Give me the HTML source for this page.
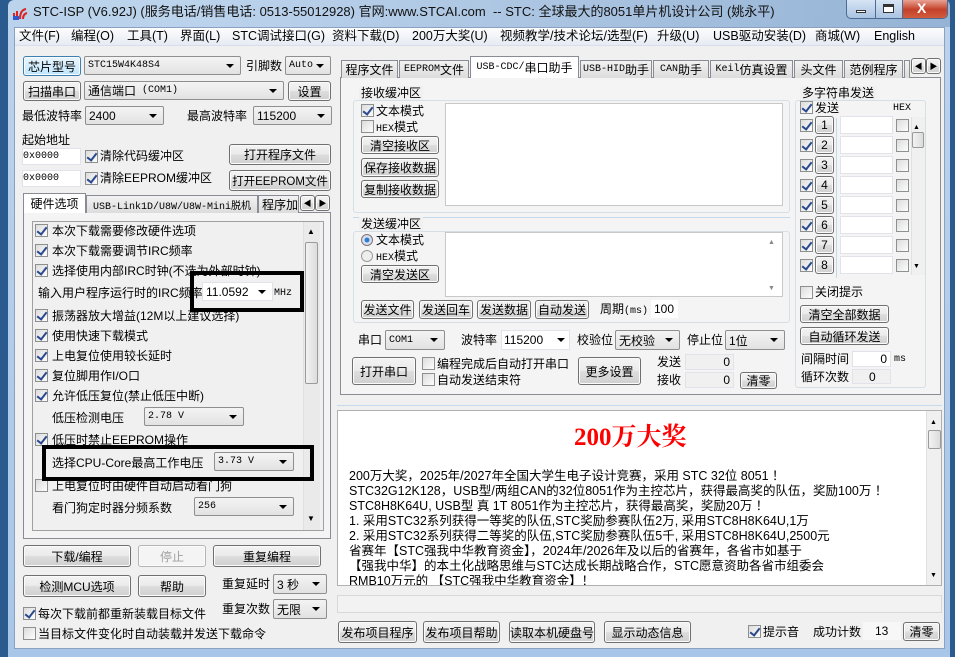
<!DOCTYPE html>
<html><head><meta charset="utf-8">
<style>
*{margin:0;padding:0;box-sizing:border-box}
body{width:955px;height:657px;overflow:hidden;background:#2b5a8e;font:12px "Liberation Sans","Noto Sans CJK SC",sans-serif;color:#000;position:relative}
.a{position:absolute}
.t{position:absolute;white-space:nowrap;line-height:14px}
.b{position:absolute;border:1px solid #707070;border-radius:3px;background:linear-gradient(#f3f3f3 0,#ebebeb 48%,#dddddd 52%,#d0d0d0 100%);white-space:nowrap;display:flex;align-items:center;justify-content:center;box-shadow:inset 0 0 0 1px #fbfbfb}
.s{position:absolute;border:1px solid #8e8f8f;border-radius:2px;background:linear-gradient(#f4f4f4,#e2e2e2);padding-left:3px;display:flex;align-items:center;white-space:nowrap}
.s::after{content:"";position:absolute;right:6px;top:50%;margin-top:-2px;border-left:4px solid transparent;border-right:4px solid transparent;border-top:4px solid #000}
.w{position:absolute;background:#fff;border:1px solid #e2e3ea;white-space:nowrap;display:flex;align-items:center}
.cb{position:absolute;width:13px;height:13px;border:1px solid #8e8f8f;background:linear-gradient(135deg,#dcdcdc,#fdfdfd)}
.cb.on::after{content:"";position:absolute;left:3px;top:0px;width:4px;height:8px;border:solid #2a4a8e;border-width:0 2px 2px 0;transform:rotate(38deg)}
.tab{position:absolute;border:1px solid #898c95;border-bottom:none;background:linear-gradient(#f2f2f2,#dcdcdc);display:flex;align-items:center;justify-content:center;white-space:nowrap;overflow:hidden}
.tab.act{background:#fff;z-index:2}
.g{position:absolute;border:1px solid #d5dfe5;border-radius:3px}
.lbl{position:absolute;background:#f0f0f0;padding:0 2px;line-height:14px;white-space:nowrap}
.bx{position:absolute;border:4px solid #000}
.sb{position:absolute;background:#eaeaea;border-left:1px solid #e0e0e0}
.mono{font-family:"Liberation Mono","Noto Sans CJK SC",monospace;font-size:10px}
</style></head><body>
<div class="a" style="left:8px;top:0;width:942px;height:657px;background:linear-gradient(#bcd3ec,#a8c6e8);border-radius:6px 6px 0 0"></div>
<div class="a" style="left:200px;top:0;width:750px;height:27px;background:linear-gradient(to right,rgba(0,0,0,0),rgba(80,120,170,.35))"></div>
<svg class="a" style="left:12px;top:4px" width="18" height="17"><path d="M2 15 L2 9 M5 15 L5 7 M8 15 Q8 6 14 5 M11 15 Q11 10 15 9" stroke="#d22" stroke-width="2" fill="none"/><rect x="1" y="12" width="6" height="4" fill="#2a5bd0"/></svg>
<div class="t" style="left:33px;top:3px;font-size:13px;line-height:18px;color:#111">STC-ISP (V6.92J) (服务电话/销售电话: 0513-55012928) 官网:www.STCAI.com &nbsp;-- STC: 全球最大的8051单片机设计公司 (姚永平)</div>
<div class="a" style="left:846px;top:0;width:102px;height:19px;border:1px solid #4b6b93;border-top:none;border-radius:0 0 5px 5px;background:linear-gradient(#d6e4f4,#a9c3e2);overflow:hidden">
 <div class="a" style="left:56px;top:0;width:46px;height:19px;background:linear-gradient(#e8a293,#c4412a 50%,#d2603f)"></div>
 <div class="a" style="left:28px;top:0;width:1px;height:19px;background:#4b6b93"></div>
 <div class="a" style="left:55px;top:0;width:1px;height:19px;background:#4b6b93"></div>
 <div class="a" style="left:9px;top:10px;width:10px;height:3px;background:#fff;border:1px solid #333"></div>
 <div class="a" style="left:36px;top:4px;width:11px;height:9px;border:1px solid #333;border-top:3px solid #333;background:#fff"></div>
 <div class="t" style="left:70px;top:1px;color:#fff;font-weight:bold;font-size:14px">X</div>
</div>
<div class="a" style="left:14px;top:27px;width:931px;height:622px;background:#f0f0f0;border:1px solid #8aa2c0"></div>
<div class="a" style="left:15px;top:28px;width:929px;height:18px;background:linear-gradient(#fdfdfe,#e6ebf3);border-bottom:1px solid #d8dfea"></div>
<div style="font-size:12.5px">
<div class="t" style="left:19px;top:29px">文件(F)</div>
<div class="t" style="left:71px;top:29px">编程(O)</div>
<div class="t" style="left:127px;top:29px">工具(T)</div>
<div class="t" style="left:180px;top:29px">界面(L)</div>
<div class="t" style="left:232px;top:29px">STC调试接口(G)</div>
<div class="t" style="left:332px;top:29px">资料下载(D)</div>
<div class="t" style="left:412px;top:29px">200万大奖(U)</div>
<div class="t" style="left:500px;top:29px">视频教学/技术论坛/选型(F)</div>
<div class="t" style="left:657px;top:29px">升级(U)</div>
<div class="t" style="left:713px;top:29px">USB驱动安装(D)</div>
<div class="t" style="left:815px;top:29px">商城(W)</div>
<div class="t" style="left:874px;top:29px">English</div>
</div>

<div class="b" style="left:23px;top:56px;width:58px;height:20px;border-color:#3c7fb1;background:linear-gradient(#eaf6fd,#bee6fd)">芯片型号</div>
<div class="s mono" style="left:84px;top:56px;width:157px;height:19px">STC15W4K48S4</div>
<div class="t" style="left:246px;top:59px">引脚数</div>
<div class="s mono" style="left:285px;top:56px;width:46px;height:19px">Auto</div>
<div class="b" style="left:23px;top:81px;width:58px;height:20px">扫描串口</div>
<div class="s" style="left:84px;top:81px;width:200px;height:19px">通信端口 <span class="mono">&nbsp;(COM1)</span></div>
<div class="b" style="left:288px;top:81px;width:43px;height:20px">设置</div>
<div class="t" style="left:22px;top:109px">最低波特率</div>
<div class="s" style="left:85px;top:106px;width:79px;height:19px">2400</div>
<div class="t" style="left:187px;top:109px">最高波特率</div>
<div class="s" style="left:253px;top:106px;width:79px;height:19px">115200</div>
<div class="t" style="left:22px;top:133px">起始地址</div>
<div class="w mono" style="left:22px;top:148px;width:59px;height:17px">0x0000</div>
<div class="cb on" style="left:85px;top:150px"></div>
<div class="t" style="left:100px;top:149px">清除代码缓冲区</div>
<div class="b" style="left:229px;top:144px;width:102px;height:21px">打开程序文件</div>
<div class="w mono" style="left:22px;top:170px;width:59px;height:17px">0x0000</div>
<div class="cb on" style="left:85px;top:172px"></div>
<div class="t" style="left:100px;top:171px">清除EEPROM缓冲区</div>
<div class="b" style="left:229px;top:170px;width:102px;height:21px;font-size:11.5px">打开EEPROM文件</div>
<div class="a" style="left:23px;top:212px;width:308px;height:327px;border:1px solid #898c95;background:#f4f4f4"></div>
<div class="tab act" style="left:23px;top:193px;width:63px;height:20px">硬件选项</div>
<div class="tab mono" style="left:86px;top:195px;width:172px;height:18px">USB-Link1D/U8W/U8W-Mini脱机</div>
<div class="tab" style="left:258px;top:195px;width:41px;height:18px;justify-content:flex-start;padding-left:3px">程序加</div>
<div class="b" style="left:300px;top:195px;width:15px;height:16px;font-size:8px">◀</div>
<div class="b" style="left:315px;top:195px;width:15px;height:16px;font-size:8px">▶</div>
<div class="a" style="left:32px;top:221px;width:292px;height:310px;border:1px solid #a0a0a0;background:#f0f0f0"></div>
<div class="sb" style="left:303px;top:222px;width:17px;height:308px"></div>
<div class="t" style="left:307px;top:225px;font-size:8px">▲</div>
<div class="a" style="left:305px;top:242px;width:13px;height:142px;border:1px solid #9a9a9a;border-radius:2px;background:linear-gradient(to right,#f2f2f2,#dcdcdc)"></div>
<div class="t" style="left:307px;top:512px;font-size:8px">▼</div>
<div class="cb on" style="left:35px;top:224px"></div><div class="t" style="left:52px;top:224px">本次下载需要修改硬件选项</div>
<div class="cb on" style="left:35px;top:244px"></div><div class="t" style="left:52px;top:244px">本次下载需要调节IRC频率</div>
<div class="cb on" style="left:35px;top:264px"></div><div class="t" style="left:52px;top:264px">选择使用内部IRC时钟(不选为外部时钟)</div>
<div class="t" style="left:38px;top:286px">输入用户程序运行时的IRC频率</div>
<div class="w" style="left:202px;top:282px;width:71px;height:19px;padding-left:3px">11.0592</div>
<div class="a" style="left:258px;top:290px;border-left:4px solid transparent;border-right:4px solid transparent;border-top:4px solid #000"></div>
<div class="t mono" style="left:274px;top:287px">MHz</div>
<div class="cb on" style="left:35px;top:309px"></div><div class="t" style="left:52px;top:309px">振荡器放大增益(12M以上建议选择)</div>
<div class="cb on" style="left:35px;top:329px"></div><div class="t" style="left:52px;top:329px">使用快速下载模式</div>
<div class="cb on" style="left:35px;top:349px"></div><div class="t" style="left:52px;top:349px">上电复位使用较长延时</div>
<div class="cb on" style="left:35px;top:369px"></div><div class="t" style="left:52px;top:369px">复位脚用作I/O口</div>
<div class="cb on" style="left:35px;top:389px"></div><div class="t" style="left:52px;top:389px">允许低压复位(禁止低压中断)</div>
<div class="t" style="left:52px;top:411px">低压检测电压</div>
<div class="s mono" style="left:144px;top:407px;width:100px;height:19px">2.78 V</div>
<div class="cb on" style="left:35px;top:433px"></div><div class="t" style="left:52px;top:433px">低压时禁止EEPROM操作</div>
<div class="t" style="left:52px;top:456px">选择CPU-Core最高工作电压</div>
<div class="s mono" style="left:214px;top:452px;width:80px;height:19px">3.73 V</div>
<div class="cb" style="left:35px;top:479px"></div><div class="t" style="left:52px;top:479px">上电复位时由硬件自动启动看门狗</div>
<div class="t" style="left:52px;top:501px">看门狗定时器分频系数</div>
<div class="s mono" style="left:194px;top:497px;width:100px;height:19px">256</div>
<div class="bx" style="left:190px;top:271px;width:114px;height:41px"></div>
<div class="bx" style="left:42px;top:445px;width:272px;height:36px"></div>
<div class="b" style="left:23px;top:545px;width:108px;height:22px">下载/编程</div>
<div class="b" style="left:138px;top:545px;width:68px;height:22px;color:#a0a0a0;border-color:#b5b5b5;background:#f4f4f4">停止</div>
<div class="b" style="left:213px;top:545px;width:108px;height:22px">重复编程</div>
<div class="b" style="left:23px;top:575px;width:108px;height:22px">检测MCU选项</div>
<div class="b" style="left:138px;top:575px;width:68px;height:22px">帮助</div>
<div class="t" style="left:222px;top:577px">重复延时</div>
<div class="s" style="left:273px;top:574px;width:54px;height:20px">3 秒</div>
<div class="t" style="left:222px;top:602px">重复次数</div>
<div class="s" style="left:273px;top:599px;width:54px;height:20px">无限</div>
<div class="cb on" style="left:23px;top:607px"></div><div class="t" style="left:38px;top:607px">每次下载前都重新装载目标文件</div>
<div class="cb" style="left:23px;top:627px"></div><div class="t" style="left:38px;top:627px">当目标文件变化时自动装载并发送下载命令</div>

<div class="a" style="left:340px;top:77px;width:601px;height:318px;border:1px solid #898c95;background:#f4f4f4"></div>
<div class="tab" style="left:341px;top:60px;width:57px;height:18px">程序文件</div>
<div class="tab" style="left:399px;top:60px;width:70px;height:18px"><span class="mono">EEPROM</span>文件</div>
<div class="tab act" style="left:470px;top:56px;width:109px;height:22px"><span class="mono">USB-CDC/</span>串口助手</div>
<div class="tab" style="left:580px;top:60px;width:72px;height:18px"><span class="mono">USB-HID</span>助手</div>
<div class="tab" style="left:653px;top:60px;width:56px;height:18px"><span class="mono">CAN</span>助手</div>
<div class="tab" style="left:710px;top:60px;width:83px;height:18px"><span class="mono">Keil</span>仿真设置</div>
<div class="tab" style="left:794px;top:60px;width:49px;height:18px">头文件</div>
<div class="tab" style="left:844px;top:60px;width:59px;height:18px">范例程序</div>
<div class="tab" style="left:904px;top:60px;width:6px;height:18px"></div>
<div class="b" style="left:911px;top:58px;width:15px;height:16px;font-size:8px">◀</div>
<div class="b" style="left:926px;top:58px;width:15px;height:16px;font-size:8px">▶</div>
<div class="g" style="left:353px;top:100px;width:437px;height:113px"></div>
<div class="lbl" style="left:359px;top:86px">接收缓冲区</div>
<div class="a" style="left:353px;top:217px;width:437px;height:1px;background:#c5d9ec"></div>
<div class="cb on" style="left:361px;top:104px"></div><div class="t" style="left:376px;top:104px">文本模式</div>
<div class="cb" style="left:361px;top:120px"></div><div class="t" style="left:376px;top:120px"><span class="mono">HEX</span>模式</div>
<div class="b" style="left:361px;top:136px;width:78px;height:18px">清空接收区</div>
<div class="b" style="left:361px;top:158px;width:78px;height:19px">保存接收数据</div>
<div class="b" style="left:361px;top:180px;width:78px;height:18px">复制接收数据</div>
<div class="a" style="left:445px;top:103px;width:338px;height:103px;background:#fff;border:1px solid #c8c8c8"></div>
<div class="g" style="left:353px;top:231px;width:437px;height:92px"></div>
<div class="lbl" style="left:359px;top:217px">发送缓冲区</div>
<div class="a" style="left:361px;top:234px;width:12px;height:12px;border-radius:50%;border:1px solid #777;background:radial-gradient(#2a7fd0 30%,#dde 40%)"></div><div class="t" style="left:376px;top:233px">文本模式</div>
<div class="a" style="left:361px;top:250px;width:12px;height:12px;border-radius:50%;border:1px solid #999;background:#eee"></div><div class="t" style="left:376px;top:249px"><span class="mono">HEX</span>模式</div>
<div class="b" style="left:361px;top:265px;width:78px;height:18px">清空发送区</div>
<div class="a" style="left:445px;top:232px;width:338px;height:65px;background:#fff;border:1px solid #c8c8c8"></div>
<div class="t" style="left:768px;top:236px;font-size:7px;color:#888">▲</div>
<div class="t" style="left:768px;top:282px;font-size:7px;color:#888">▼</div>
<div class="b" style="left:361px;top:300px;width:53px;height:19px">发送文件</div>
<div class="b" style="left:419px;top:300px;width:54px;height:19px">发送回车</div>
<div class="b" style="left:477px;top:300px;width:54px;height:19px">发送数据</div>
<div class="b" style="left:535px;top:300px;width:54px;height:19px">自动发送</div>
<div class="t" style="left:600px;top:302px">周期<span class="mono">(ms)</span></div>
<div class="w" style="left:651px;top:300px;width:27px;height:18px;padding-left:3px;border:none">100</div>
<div class="t" style="left:358px;top:333px">串口</div>
<div class="s mono" style="left:385px;top:330px;width:60px;height:20px">COM1</div>
<div class="t" style="left:461px;top:333px">波特率</div>
<div class="w" style="left:501px;top:330px;width:69px;height:20px;padding-left:2px">115200</div>
<div class="a" style="left:557px;top:338px;border-left:4px solid transparent;border-right:4px solid transparent;border-top:4px solid #000"></div>
<div class="t" style="left:577px;top:333px">校验位</div>
<div class="s" style="left:615px;top:330px;width:65px;height:20px">无校验</div>
<div class="t" style="left:687px;top:333px">停止位</div>
<div class="s" style="left:725px;top:330px;width:60px;height:20px">1位</div>
<div class="b" style="left:352px;top:357px;width:64px;height:28px">打开串口</div>
<div class="cb" style="left:422px;top:357px"></div><div class="t" style="left:437px;top:357px">编程完成后自动打开串口</div>
<div class="cb" style="left:422px;top:373px"></div><div class="t" style="left:437px;top:373px">自动发送结束符</div>
<div class="b" style="left:578px;top:357px;width:63px;height:28px">更多设置</div>
<div class="t" style="left:657px;top:355px">发送</div>
<div class="w" style="left:685px;top:354px;width:49px;height:16px;justify-content:flex-end;padding-right:3px;background:#f0f0f0">0</div>
<div class="t" style="left:657px;top:373px">接收</div>
<div class="w" style="left:685px;top:372px;width:49px;height:16px;justify-content:flex-end;padding-right:3px;background:#f0f0f0">0</div>
<div class="b" style="left:740px;top:372px;width:37px;height:17px">清零</div>
<div class="g" style="left:795px;top:100px;width:131px;height:288px"></div>
<div class="lbl" style="left:800px;top:86px">多字符串发送</div>
<div class="cb on" style="left:800px;top:101px"></div><div class="t" style="left:815px;top:101px">发送</div>
<div class="t mono" style="left:893px;top:102px">HEX</div>
<div class="a" style="left:836px;top:118px;width:1px;height:160px;background:#c5d9ec"></div>
<div class="sb" style="left:911px;top:117px;width:14px;height:158px;background:#f0f0f0"></div>
<div class="t" style="left:913px;top:121px;font-size:7px">▲</div>
<div class="a" style="left:912px;top:132px;width:12px;height:16px;border:1px solid #9a9a9a;border-radius:2px;background:linear-gradient(to right,#f2f2f2,#dcdcdc)"></div>
<div class="t" style="left:913px;top:260px;font-size:7px">▼</div>
<div class="cb on" style="left:800px;top:119px"></div><div class="b" style="left:815px;top:116px;width:19px;height:18px">1</div><div class="w" style="left:840px;top:116px;width:53px;height:18px"></div><div class="cb" style="left:896px;top:119px"></div>
<div class="cb on" style="left:800px;top:139px"></div><div class="b" style="left:815px;top:136px;width:19px;height:18px">2</div><div class="w" style="left:840px;top:136px;width:53px;height:18px"></div><div class="cb" style="left:896px;top:139px"></div>
<div class="cb on" style="left:800px;top:159px"></div><div class="b" style="left:815px;top:156px;width:19px;height:18px">3</div><div class="w" style="left:840px;top:156px;width:53px;height:18px"></div><div class="cb" style="left:896px;top:159px"></div>
<div class="cb on" style="left:800px;top:179px"></div><div class="b" style="left:815px;top:176px;width:19px;height:18px">4</div><div class="w" style="left:840px;top:176px;width:53px;height:18px"></div><div class="cb" style="left:896px;top:179px"></div>
<div class="cb on" style="left:800px;top:199px"></div><div class="b" style="left:815px;top:196px;width:19px;height:18px">5</div><div class="w" style="left:840px;top:196px;width:53px;height:18px"></div><div class="cb" style="left:896px;top:199px"></div>
<div class="cb on" style="left:800px;top:219px"></div><div class="b" style="left:815px;top:216px;width:19px;height:18px">6</div><div class="w" style="left:840px;top:216px;width:53px;height:18px"></div><div class="cb" style="left:896px;top:219px"></div>
<div class="cb on" style="left:800px;top:239px"></div><div class="b" style="left:815px;top:236px;width:19px;height:18px">7</div><div class="w" style="left:840px;top:236px;width:53px;height:18px"></div><div class="cb" style="left:896px;top:239px"></div>
<div class="cb on" style="left:800px;top:259px"></div><div class="b" style="left:815px;top:256px;width:19px;height:18px">8</div><div class="w" style="left:840px;top:256px;width:53px;height:18px"></div><div class="cb" style="left:896px;top:259px"></div>
<div class="cb" style="left:800px;top:286px"></div><div class="t" style="left:815px;top:285px">关闭提示</div>
<div class="b" style="left:800px;top:305px;width:89px;height:18px">清空全部数据</div>
<div class="b" style="left:800px;top:327px;width:89px;height:18px">自动循环发送</div>
<div class="t" style="left:801px;top:352px">间隔时间</div>
<div class="w" style="left:852px;top:351px;width:39px;height:16px;justify-content:flex-end;padding-right:3px">0</div>
<div class="t mono" style="left:894px;top:353px">ms</div>
<div class="t" style="left:801px;top:370px">循环次数</div>
<div class="w" style="left:852px;top:369px;width:39px;height:15px;padding-left:16px;background:#f0f0f0">0</div>

<div class="a" style="left:337px;top:405px;width:605px;height:1px;background:#c5d9ec"></div>
<div class="a" style="left:337px;top:410px;width:605px;height:176px;background:#fff;border:1px solid #b0b0b0;overflow:hidden">
 <div class="t" style="left:236px;top:12px;font:bold 25px 'Liberation Serif','Noto Serif CJK SC',serif;color:#f00;line-height:30px">200万大奖</div>
 <div style="position:absolute;left:11px;top:58px;font-size:12.5px;line-height:15px;white-space:nowrap">
 200万大奖，2025年/2027年全国大学生电子设计竞赛，采用 STC 32位 8051 ！<br>
 STC32G12K128，USB型/两组CAN的32位8051作为主控芯片，获得最高奖的队伍，奖励100万 ！<br>
 STC8H8K64U, USB型 真 1T 8051作为主控芯片，获得最高奖，奖励20万 ！<br>
 1. 采用STC32系列获得一等奖的队伍,STC奖励参赛队伍2万, 采用STC8H8K64U,1万<br>
 2. 采用STC32系列获得二等奖的队伍,STC奖励参赛队伍5千, 采用STC8H8K64U,2500元<br>
 省赛年【STC强我中华教育资金】，2024年/2026年及以后的省赛年，各省市如基于<br>
 【强我中华】的本土化战略思维与STC达成长期战略合作，STC愿意资助各省市组委会<br>
 RMB10万元的 【STC强我中华教育资金】！
 </div>
 <div class="sb" style="left:588px;top:0;width:16px;height:175px;background:#f0f0f0"></div>
 <div class="t" style="left:592px;top:5px;font-size:7px">▲</div>
 <div class="a" style="left:590px;top:19px;width:13px;height:19px;border:1px solid #9a9a9a;border-radius:2px;background:linear-gradient(to right,#f2f2f2,#dcdcdc)"></div>
 <div class="t" style="left:592px;top:158px;font-size:7px">▼</div>
</div>
<div class="a" style="left:337px;top:595px;width:605px;height:18px;background:#f2f2f2;border:1px solid #d8d8d8"></div>
<div class="b" style="left:338px;top:621px;width:79px;height:22px">发布项目程序</div>
<div class="b" style="left:423px;top:621px;width:77px;height:22px">发布项目帮助</div>
<div class="b" style="left:509px;top:621px;width:86px;height:22px">读取本机硬盘号</div>
<div class="b" style="left:604px;top:621px;width:87px;height:22px">显示动态信息</div>
<div class="cb on" style="left:748px;top:625px"></div><div class="t" style="left:763px;top:625px">提示音</div>
<div class="t" style="left:813px;top:625px">成功计数</div>
<div class="w" style="left:863px;top:622px;width:38px;height:18px;padding-left:12px;border:none;background:#f7f7f7">13</div>
<div class="b" style="left:903px;top:622px;width:37px;height:19px">清零</div>
</body></html>
